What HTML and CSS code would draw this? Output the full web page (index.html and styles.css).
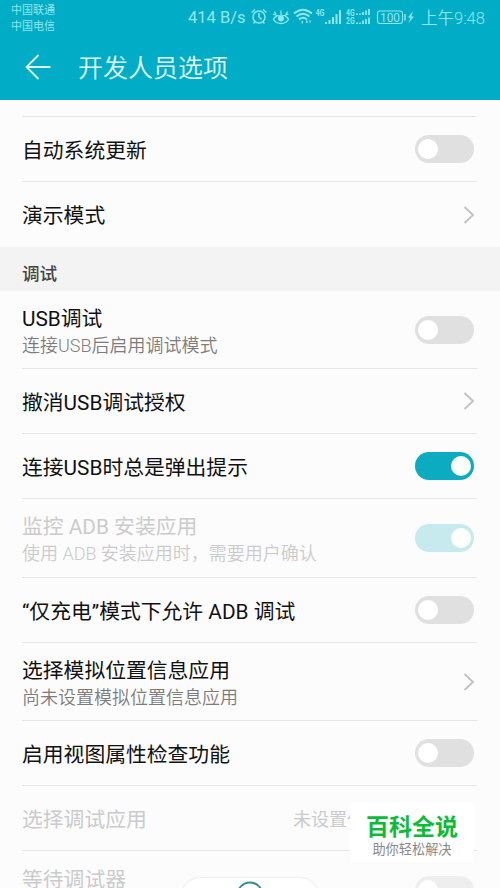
FILE: index.html
```html
<!DOCTYPE html>
<html lang="zh-CN">
<head>
<meta charset="utf-8">
<title>开发人员选项</title>
<link rel="stylesheet" href="styles.css">
</head>
<body>
<div class="screen">
  <header class="header">
    <div class="status">
      <div class="carriers"><span>中国联通</span><span>中国电信</span></div>
      <span class="speed">414 B/s</span>
      <svg class="status-icons" width="172" height="24" viewBox="0 0 172 24" fill="none" stroke="#93e6ec" stroke-width="1.5">
        <circle cx="9" cy="12" r="6"/><path d="M9 8v4l2.500 2.500M1.500 7.500l3.500-3M16.500 7.500l-3.500-3M5 17l-1.500 1.500M13 17l1.500 1.500"/>
        <path d="M23 9Q30.500 13 38.500 9M27 11Q23.500 13 23.500 14.500Q26 18.500 31 18.500Q36 18.500 38.500 14.500Q38.500 13 35 11M31 10V5.500M26 9.500l-1.500-3M36 9.500l1.500-3" stroke-width="1.300"/><circle cx="31" cy="13.500" r="3" fill="#93e6ec" stroke="none"/>
        <path d="M44 8.500Q53 1 62 8.500M46.500 11.500Q53 6 59.500 11.500M49 14.500Q53 11 57 14.500" stroke-width="1.800"/><path d="M51 17l2-1.500v3.500zM56 15.500h1.500v2.500H56zM59 15.500h2l-1 3z" fill="#93e6ec" stroke="none"/>
        <path d="M76 19v-2M79.500 19v-4M83 19v-7M86.500 19v-10M90 19V5" stroke-width="2"/>
        <path d="M107 10v-1.500M110 10v-1.500M113 10V7M116 10V5.500M119 10V4M107 19v-1.500M110 19v-1.500M113 19v-3.500M116 19v-5M119 19v-6.500" stroke-width="1.800"/>
        <rect x="127.500" y="6" width="25" height="12.500" rx="2.500" stroke-width="1.100"/><path d="M155 9v6.500"/>
        <path d="M163 6l-5 6.500h2.500l-2 5.500 5.500-6.500h-2.700z" fill="#93e6ec" stroke="none"/>
        <g class="tiny" fill="#93e6ec" stroke="none"><text x="65.500" y="10.500" textLength="9" lengthAdjust="spacingAndGlyphs">4G</text><text x="96" y="10.500" textLength="8.500" lengthAdjust="spacingAndGlyphs">4G</text><text x="96" y="19" textLength="8.500" lengthAdjust="spacingAndGlyphs">2G</text><text class="battery" x="130" y="16.500" textLength="20" lengthAdjust="spacingAndGlyphs">100</text></g>
      </svg>
      <span class="clock">上午9:48</span>
    </div>
    <div class="titlebar">
      <svg class="back" width="28" height="28" viewBox="0 0 28 28" fill="none" stroke="#e2fafa" stroke-width="1.800"><path d="M26.500 14H2.500M14.500 2L2.500 14l12 12"/></svg>
      <h1>开发人员选项</h1>
    </div>
  </header>
  <main>
    <div class="row stub"></div>
    <div class="row"><p class="name">自动系统更新</p><i class="switch"></i></div>
    <div class="row last"><p class="name">演示模式</p><svg class="chevron" viewBox="0 0 12 20"><path d="M1.500 2l8.500 8-8.500 8"/></svg></div>
    <h2>调试</h2>
    <div class="row tall"><div><p class="name">USB调试</p><p class="desc">连接USB后启用调试模式</p></div><i class="switch"></i></div>
    <div class="row"><p class="name">撤消USB调试授权</p><svg class="chevron" viewBox="0 0 12 20"><path d="M1.500 2l8.500 8-8.500 8"/></svg></div>
    <div class="row"><p class="name">连接USB时总是弹出提示</p><i class="switch on"></i></div>
    <div class="row tall monitor disabled"><div><p class="name">监控 ADB 安装应用</p><p class="desc">使用 ADB 安装应用时，需要用户确认</p></div><i class="switch on"></i></div>
    <div class="row"><p class="name">“仅充电”模式下允许 ADB 调试</p><i class="switch"></i></div>
    <div class="row tall"><div><p class="name">选择模拟位置信息应用</p><p class="desc">尚未设置模拟位置信息应用</p></div><svg class="chevron" viewBox="0 0 12 20"><path d="M1.500 2l8.500 8-8.500 8"/></svg></div>
    <div class="row"><p class="name">启用视图属性检查功能</p><i class="switch"></i></div>
    <div class="row disabled"><p class="name">选择调试应用</p><p class="value">未设置任</p></div>
    <div class="row wait disabled"><p class="name">等待调试器</p><i class="switch"></i></div>
  </main>
  <div class="pill"><svg width="28" height="28" viewBox="0 0 28 28"><circle cx="14" cy="14" r="12.500" fill="none" stroke="#398e93" stroke-width="2"/></svg></div>
  <aside class="brand"><strong>百科全说</strong><span>助你轻松解决</span></aside>
</div>
</body>
</html>
```
FILE: styles.css
```css
* { box-sizing: border-box; }
body { margin: 0; background: #fcfcfc; font-family: Roboto, "Noto Sans CJK SC", sans-serif; color: #111; }
p, h1, h2 { margin: 0; font-weight: 400; white-space: nowrap; }
.screen { position: relative; width: 500px; height: 888px; overflow: hidden; }
.header { height: 100px; background: #00acc6; color: #93e6ec; }
.status { display: flex; height: 34px; padding-left: 11px; }
.carriers { display: flex; flex-direction: column; width: 177px; padding-top: 3px; font-size: 11px; line-height: 15.5px; }
.speed { width: 62px; font-size: 16.5px; line-height: 36px; white-space: nowrap; }
.status-icons { margin-top: 5px; flex: none; }
.tiny { font-size: 8.5px; font-weight: 700; }
.battery { font-size: 12px; font-weight: 400; }
.clock { margin-left: -1px; font-size: 16.5px; font-weight: 350; line-height: 37px; white-space: nowrap; }
.titlebar { display: flex; align-items: center; height: 66px; padding-left: 24px; }
.back { margin-right: 26px; }
h1 { padding-top: 4px; font-size: 25px; font-weight: 350; color: #e2fafa; line-height: 36px; }
.row { display: flex; align-items: center; justify-content: space-between; height: 65px; margin-left: 22px; margin-right: 23px; padding-right: 3px; border-bottom: 1px solid #e6e6e8; }
.stub { height: 17px; }
.last { border-bottom: 0; }
.tall { height: 78px; }
.monitor { height: 79px; }
.name { padding-top: 3px; font-size: 20.8px; line-height: 28px; }
.last .name { padding-top: 2px; }
.tall .name { padding-top: 4px; }
.desc { font-size: 18px; font-weight: 350; line-height: 26px; color: #7c7c7c; }
.value { width: 181px; font-size: 18px; }
h2 { height: 44px; padding: 7px 22px 0; background: #f3f3f3; font-size: 17.6px; font-weight: 500; line-height: 40px; color: #444; }
.switch { flex: none; width: 59px; height: 28px; padding: 4px 3px; border-radius: 14px; background: #e0e0e0; }
.switch::before { content: ""; display: block; width: 20px; height: 20px; border-radius: 50%; background: #fff; }
.on { background: #0babc1; }
.on::before { margin-left: 33px; }
.chevron { flex: none; width: 12px; height: 20px; margin-right: -1px; fill: none; stroke: #c2c2c2; stroke-width: 1.9; }
.disabled .name, .disabled .desc, .disabled .value { color: #cbcbcb; }
.disabled .switch { background: #eee; }
.disabled .on { background: #c6eaee; }
.wait { height: 55px; }
.wait .switch { margin-top: 25px; align-self: flex-start; }
.pill { position: absolute; left: 181px; top: 878px; width: 138px; height: 40px; padding-top: 3px; border-radius: 20px; background: #fff; box-shadow: 0 0 3px #ddd; text-align: center; }
.brand { position: absolute; left: 350px; top: 803px; width: 124px; height: 60px; display: flex; flex-direction: column; align-items: center; background: #fff; }
.brand strong { margin-top: 11px; font-size: 23px; font-weight: 700; line-height: 28px; color: #0abc38; }
.brand span { font-size: 13.2px; line-height: 16px; color: #888; }
```
